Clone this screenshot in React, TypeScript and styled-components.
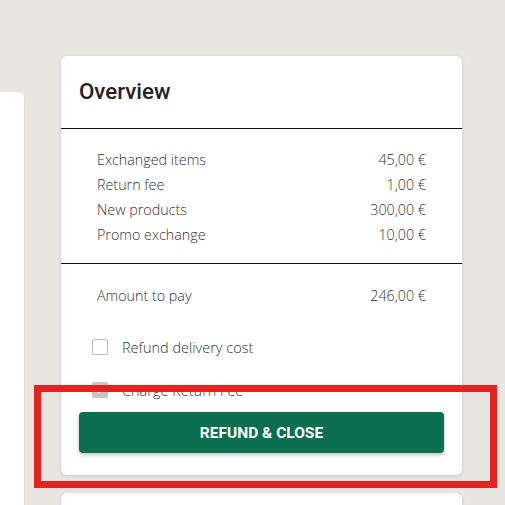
import React from "react";
import styled, { createGlobalStyle } from "styled-components";

const GlobalStyle = createGlobalStyle`
  html, body {
    margin: 0;
    padding: 0;
    background: #e8e6e0;
    overflow: hidden;
  }
  body {
    font-family: "Open Sans", "Liberation Sans", sans-serif;
  }
`;

const Page = styled.div`
  position: relative;
  display: flex;
  align-items: flex-start;
  width: 505px;
  height: 505px;
  overflow: hidden;
`;

const SidePanel = styled.div`
  width: 24px;
  height: 440px;
  margin-top: 92px;
  flex-shrink: 0;
  background: #fff;
  border-radius: 0 6px 0 0;
  box-shadow: 0 1px 3px rgba(0, 0, 0, 0.08);
`;

const Column = styled.div`
  display: flex;
  flex-direction: column;
  gap: 18px;
  width: 401px;
  margin-left: 37px;
  margin-top: 56px;
`;

const Card = styled.div<{ $minHeight?: number }>`
  background: #fff;
  border-radius: 6px;
  box-shadow: 0 1px 4px rgba(0, 0, 0, 0.12);
  min-height: ${(p) => (p.$minHeight ? `${p.$minHeight}px` : "auto")};
`;

const Header = styled.div`
  height: 73px;
  box-sizing: border-box;
  display: flex;
  align-items: center;
  padding: 0 18px 3px;
  border-bottom: 1px solid #111;
`;

const Title = styled.h2`
  margin: 0;
  font-family: Roboto, "Liberation Sans", sans-serif;
  font-weight: 500;
  font-size: 22.3px;
  color: #222;
`;

const Section = styled.div<{ $top: number; $bottom: number; $divider?: boolean }>`
  padding: ${(p) => `${p.$top}px 36px ${p.$bottom}px`};
  border-bottom: ${(p) => (p.$divider ? "1px solid #111" : "none")};
`;

const Row = styled.div`
  display: flex;
  justify-content: space-between;
  height: 25px;
  line-height: 25px;
  font-size: 14.3px;
  font-weight: 300;
  color: #333;
`;

const Options = styled.div`
  display: flex;
  flex-direction: column;
  gap: 27px;
  padding: 31px 31px 0;
`;

const OptionRow = styled.label`
  display: flex;
  align-items: center;
  gap: 14px;
  height: 16px;
  font-size: 14.5px;
  font-weight: 300;
  color: #333;
`;

const Box = styled.span<{ $checked?: boolean }>`
  width: 16px;
  height: 16px;
  box-sizing: border-box;
  border-radius: 2px;
  border: 1.5px solid ${(p) => (p.$checked ? "#c6c6c6" : "#bdbdbd")};
  background: ${(p) => (p.$checked ? "#c6c6c6" : "#fff")};
  display: flex;
  align-items: center;
  justify-content: center;
`;

const ButtonWrap = styled.div`
  padding: 14px 18px 22px;
`;

const PrimaryButton = styled.button`
  width: 100%;
  height: 41px;
  border: none;
  border-radius: 4px;
  background: #0b6e4f;
  color: #fff;
  font-family: Roboto, "Liberation Sans", sans-serif;
  font-weight: 700;
  font-size: 15.5px;
  box-shadow: 0 2px 4px rgba(0, 0, 0, 0.25);
  cursor: pointer;
`;

const Highlight = styled.div`
  position: absolute;
  left: 34px;
  top: 385px;
  width: 463px;
  height: 103px;
  box-sizing: border-box;
  border: 7px solid #e52222;
  pointer-events: none;
`;

const items = [
  ["Exchanged items", "45,00 €"],
  ["Return fee", "1,00 €"],
  ["New products", "300,00 €"],
  ["Promo exchange", "10,00 €"],
];

const App: React.FC = () => {
  return (
    <>
      <GlobalStyle />
      <Page>
        <SidePanel />
        <Column>
          <Card>
            <Header>
              <Title>Overview</Title>
            </Header>
            <Section $top={18} $bottom={16} $divider>
              {items.map(([label, value]) => (
                <Row key={label}>
                  <span>{label}</span>
                  <span>{value}</span>
                </Row>
              ))}
            </Section>
            <Section $top={19} $bottom={0}>
              <Row>
                <span>Amount to pay</span>
                <span>246,00 €</span>
              </Row>
            </Section>
            <Options>
              <OptionRow>
                <Box />
                Refund delivery cost
              </OptionRow>
              <OptionRow>
                <Box $checked>
                  <svg width="10" height="10" viewBox="0 0 10 10">
                    <path d="M2 5.2 L4.2 7.3 L8.2 2.8" fill="none" stroke="#fff" strokeWidth="1.6" />
                  </svg>
                </Box>
                Charge Return Fee
              </OptionRow>
            </Options>
            <ButtonWrap>
              <PrimaryButton>REFUND &amp; CLOSE</PrimaryButton>
            </ButtonWrap>
          </Card>
          <Card $minHeight={60} />
        </Column>
        <Highlight />
      </Page>
    </>
  );
};

export default App;
